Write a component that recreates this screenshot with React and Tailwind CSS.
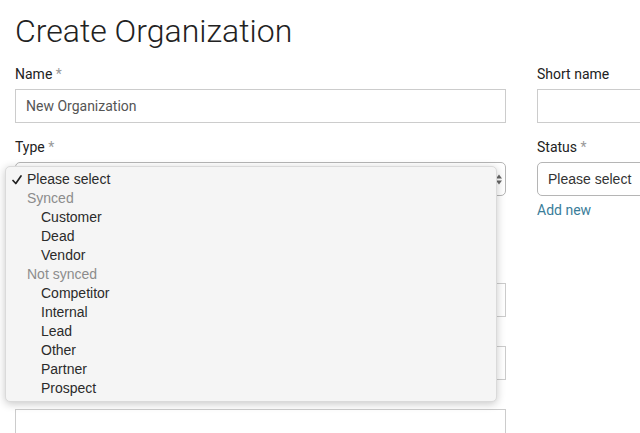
import React from 'react';

const roboto = { fontFamily: 'Roboto, "Liberation Sans", sans-serif' };

const typeOptions = [
  { label: 'Please select', selected: true },
  { group: 'Synced' },
  { label: 'Customer', indent: true },
  { label: 'Dead', indent: true },
  { label: 'Vendor', indent: true },
  { group: 'Not synced' },
  { label: 'Competitor', indent: true },
  { label: 'Internal', indent: true },
  { label: 'Lead', indent: true },
  { label: 'Other', indent: true },
  { label: 'Partner', indent: true },
  { label: 'Prospect', indent: true },
];

const Label = ({ children, required }) => (
  <div className="text-[14px] leading-[20px] text-[#222] mb-[5px]">
    {children}
    {required && <span className="text-[#999]"> *</span>}
  </div>
);

const TextInput = ({ value }) => (
  <div className="h-[34px] border border-[#ccc] bg-white px-[10px] flex items-center text-[14px] text-[#555]">
    {value}
  </div>
);

const NativeSelect = ({ value, arrows }) => (
  <div className="h-[34px] border border-[#b5b5b5] rounded-[5px] bg-white pl-[10px] pr-[3px] flex items-center justify-between text-[14px] text-[#333] font-['Liberation_Sans',sans-serif]">
    <span>{value}</span>
    {arrows && (
      <svg width="6" height="11" viewBox="0 0 6 11" className="text-[#666]">
        <path d="M3 0.5 L6 4.5 L0 4.5 Z" fill="currentColor" />
        <path d="M3 10.5 L6 6.5 L0 6.5 Z" fill="currentColor" />
      </svg>
    )}
  </div>
);

const Check = () => (
  <svg width="10" height="10" viewBox="0 0 10 10" className="absolute left-[6px] top-[5px]">
    <path d="M1 5.5 L3.8 8.5 L9 1" fill="none" stroke="#222" strokeWidth="1.7" strokeLinecap="round" strokeLinejoin="round" />
  </svg>
);

const TypeMenu = () => (
  <div className="absolute left-[5px] top-[166px] w-[492px] h-[236px] bg-[#f5f5f5] rounded-[5px] border border-[#dadada] shadow-[0_2px_8px_rgba(0,0,0,0.22)] pt-[3px] font-['Liberation_Sans',sans-serif] text-[14px]">
    {typeOptions.map((opt, i) => {
      if (opt.group) {
        return (
          <div key={i} className="h-[19px] leading-[19px] pl-[21px] text-[#8c8c8c]">
            {opt.group}
          </div>
        );
      }
      return (
        <div key={i} className="h-[19px] leading-[19px] relative text-[#2b2b2b]" style={{ paddingLeft: opt.indent ? 35 : 21 }}>
          {opt.selected && <Check />}
          {opt.label}
        </div>
      );
    })}
  </div>
);

export default function App() {
  return (
    <div className="w-[640px] h-[433px] overflow-hidden bg-white relative" style={roboto}>
      <div className="w-[1100px] pl-[15px]">
        <h1 className="text-[32px] font-light leading-[36px] text-[#222] pt-[13px] mb-[15px]">
          Create Organization
        </h1>
        <div className="grid grid-cols-[491px_491px] gap-x-[31px]">
          <div>
            <div className="mb-[14px]">
              <Label required>Name</Label>
              <TextInput value="New Organization" />
            </div>
            <div className="mb-[14px]">
              <Label required>Type</Label>
              <NativeSelect value="Please select" arrows />
            </div>
            <div className="pt-[73px] flex flex-col gap-[29px]">
              <TextInput value="" />
              <TextInput value="" />
              <TextInput value="" />
            </div>
          </div>
          <div>
            <div className="mb-[14px]">
              <Label>Short name</Label>
              <TextInput value="" />
            </div>
            <div className="mb-[14px]">
              <Label required>Status</Label>
              <NativeSelect value="Please select" />
              <div className="text-[14px] leading-[20px] text-[#3a7d99] mt-[4px]">Add new</div>
            </div>
          </div>
        </div>
      </div>
      <TypeMenu />
    </div>
  );
}
